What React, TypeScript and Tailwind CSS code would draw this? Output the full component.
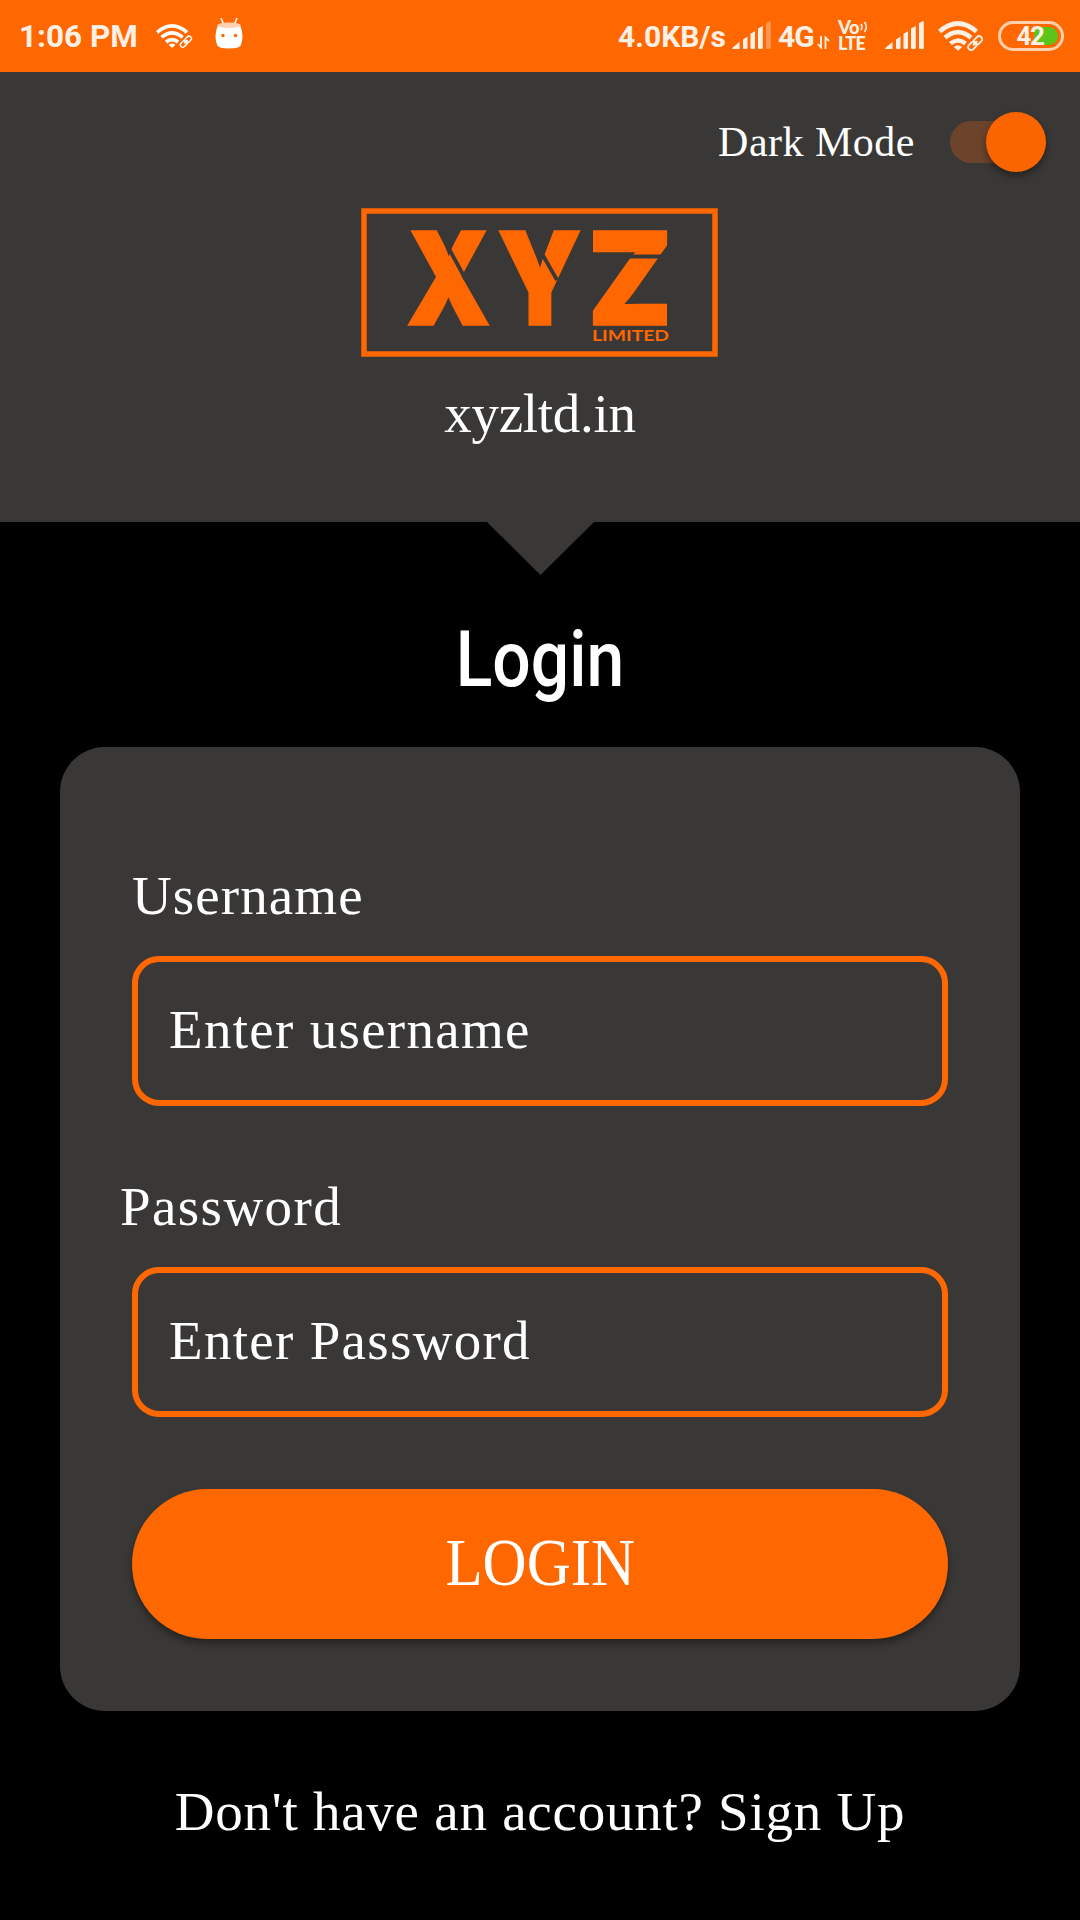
import React, { useState } from "react";

const CREAM = "#fff0e6";

function LinkedWifi({ className, fill }: { className: string; fill: string }) {
  return (
    <svg className={className} viewBox="0 0 46 30" fill="none">
      <g stroke={fill} strokeWidth="4.6">
        <path d="M1.5 10.5Q20 -5.5 38.5 10.5" />
        <path d="M7 16.7Q20 5.5 33 16.7" />
        <path d="M12.5 22.5Q20 16.5 27.5 22.5" />
      </g>
      <path d="M15.8 26Q20 22.6 24.2 26L20 29.8Z" fill={fill} />
      <g transform="rotate(-45 37 22)" stroke="#ff6700" strokeWidth="4.5">
        <rect x="28.5" y="19.2" width="9.5" height="6" rx="3" />
        <rect x="36" y="19.2" width="9.5" height="6" rx="3" />
      </g>
      <g transform="rotate(-45 37 22)" stroke={fill} strokeWidth="1.8">
        <rect x="28.5" y="19.2" width="9.5" height="6" rx="3" />
        <rect x="36" y="19.2" width="9.5" height="6" rx="3" />
        <path d="M34 22.2h6" />
      </g>
    </svg>
  );
}

function Signal({ className, weak }: { className: string; weak?: boolean }) {
  return (
    <svg className={className} viewBox="0 0 39 28" fill={CREAM}>
      <path d="M1 26.2L7.5 21V28H1.2Q-.3 27.8 1 26.2Z" />
      <path d="M11 18.5L15.5 15.5V26.5Q15.5 28 14 28H12.5Q11 28 11 26.5Z" />
      <path d="M18.5 12.7L23 10.2V26.5Q23 28 21.5 28H20Q18.5 28 18.5 26.5Z" />
      <path d="M26 7.5L30.8 5V26.5Q30.8 28 29.3 28H27.5Q26 28 26 26.5Z" />
      <path
        d="M34 2.3L37.5 .2Q38.8 0 38.8 1.3V26.5Q38.8 28 37.3 28H35.5Q34 28 34 26.5Z"
        fillOpacity={weak ? 0.35 : 1}
      />
    </svg>
  );
}

function StatusBar() {
  return (
    <header className="flex h-[72px] items-start bg-[#ff6700] pl-[19px] font-[Roboto] font-bold text-[#fff0e6]">
      <span className="mt-[17px] w-[137px] text-[31.5px] leading-[40px] whitespace-nowrap">1:06 PM</span>
      <LinkedWifi className="mt-[23px] h-[26px] w-[37px]" fill="#ffffff" />
      <svg className="mt-[17px] ml-[22px] h-[32px] w-[28px]" viewBox="0 0 28 32">
        <path d="M6 1L8.5 7M22 1L19.5 7" stroke="#fff" strokeWidth="1.6" />
        <path d="M2.5 9Q14 7 25.5 9Q29.5 20 25.5 29Q23 31.5 14 31.5T2.5 29Q-1.500 20 2.5 9Z" fill="#fff" />
        <ellipse cx="14" cy="8.2" rx="11.8" ry="2.8" fill="#ffd1b0" />
        <circle cx="8" cy="18.5" r="1.7" fill="#ff6700" />
        <circle cx="20.5" cy="18.5" r="1.7" fill="#ff6700" />
      </svg>
      <span className="mt-[17px] ml-auto w-[114px] text-[30px] leading-[40px] whitespace-nowrap">4.0KB/s</span>
      <Signal className="mt-[21px] h-[28px] w-[39px]" weak />
      <span className="mt-[17px] ml-[7px] w-[39px] text-[30px] leading-[40px] tracking-[-1px]">4G</span>
      <svg className="mt-[36px] h-[13px] w-[13px]" viewBox="0 0 13 13" fill="none" stroke={CREAM} strokeWidth="1.8">
        <path d="M4 0V11.5L.8 8M8.5 13V1.5L12 5" />
      </svg>
      <div className="mt-[19px] ml-[8px] flex w-[32px] flex-col font-[Lato] font-black">
        <span className="flex h-[16px] items-center text-[18.5px] leading-[16px] tracking-[-0.5px]">
          Vo
          <svg className="ml-px h-[12px] w-[8px] shrink-0" viewBox="0 0 8 12" fill="none" stroke={CREAM} strokeWidth="1.6">
            <path d="M1 3Q3 6 1 9M4.500 1Q8 6 4.500 11" />
          </svg>
        </span>
        <span className="h-[16px] text-[18px] leading-[17px] tracking-[-0.6px]">LTE</span>
      </div>
      <Signal className="mt-[21px] ml-[15px] h-[28px] w-[39px]" />
      <LinkedWifi className="mt-[21px] ml-[14px] h-[30px] w-[46px]" fill={CREAM} />
      <div className="mt-[21px] mr-[16px] ml-[14px] flex h-[30px] w-[66px] items-center rounded-full border-[3px] border-[#ffd0ad] p-[3px]">
        <div className="relative flex h-[18px] w-full items-center justify-center overflow-visible">
          <div className="absolute top-0 right-0 h-[18px] w-[24px] rounded-r-full bg-[#5cc518]" />
          <span className="relative mr-[2px] text-[26px] leading-none tracking-[-1.500px]">42</span>
        </div>
      </div>
    </header>
  );
}

function Logo() {
  return (
    <svg className="h-[150px] w-[358px]" viewBox="361 208 358 150" aria-label="XYZ Limited">
      <rect x="364" y="211" width="351" height="143" fill="none" stroke="#ff6700" strokeWidth="5.5" />
      <g fill="#ff6700" stroke="#ff6700" strokeWidth="1.5" fontFamily="Inter" fontWeight="900" fontSize="129">
        <text x="406" y="324.700" textLength="85" lengthAdjust="spacingAndGlyphs">X</text>
        <text x="497" y="324.700" textLength="85" lengthAdjust="spacingAndGlyphs">Y</text>
        <text x="587.500" y="324.700" textLength="85" lengthAdjust="spacingAndGlyphs">Z</text>
      </g>
      <path d="M448 247L466 280M541 252L557 280M590 256.500H672" stroke="#3a3836" strokeWidth="3.8" />
      <text x="592" y="340.500" fill="#ff6700" fontFamily="Lato" fontWeight="700" fontSize="14.500" textLength="77" lengthAdjust="spacingAndGlyphs">
        LIMITED
      </text>
    </svg>
  );
}

function Field({ placeholder, type }: { placeholder: string; type: string }) {
  return (
    <input
      type={type}
      placeholder={placeholder}
      className="block h-[150px] w-full rounded-[27px] border-[6px] border-[#ff6700] bg-transparent pb-[4px] pl-[31px] text-[55px] tracking-[1.3px] text-white outline-none placeholder:text-white placeholder:opacity-100"
    />
  );
}

export default function App() {
  const [dark, setDark] = useState(true);
  return (
    <div className="flex h-[1920px] w-[1080px] flex-col overflow-hidden bg-black font-['Liberation_Serif',serif] text-white">
      <StatusBar />
      <section className="flex h-[450px] shrink-0 flex-col items-center bg-[#3a3836]">
        <div className="flex h-[136px] w-full items-center justify-end pt-[4px] pr-[34px]">
          <span className="text-[42px] tracking-[0.5px]">Dark Mode</span>
          <button
            aria-pressed={dark}
            onClick={() => setDark(!dark)}
            className="ml-[35px] flex h-[42px] w-[96px] items-center justify-end rounded-full bg-[#6c432b]"
          >
            <span className="size-[60px] shrink-0 rounded-full bg-[#fb6500] shadow-[0_4px_7px_rgba(0,0,0,0.4)]" />
          </button>
        </div>
        <Logo />
        <p className="mt-[24px] text-[55px] leading-[64px] tracking-[-0.3px]">xyzltd.in</p>
      </section>
      <svg className="h-[53px] w-[107px] shrink-0 self-center" viewBox="0 0 107 53">
        <path d="M0 0H107L53.5 53Z" fill="#3a3836" />
      </svg>
      <h1 className="mt-[40px] h-[98px] origin-center scale-x-[0.88] text-center font-[Roboto] text-[77px] leading-[90px] font-medium">
        Login
      </h1>
      <main className="mx-[60px] mt-[34px] flex h-[964px] shrink-0 flex-col rounded-[45px] bg-[#3a3836] px-[72px]">
        <label className="mt-[117px] h-[92px] text-[55px] leading-[64px] tracking-[1.1px]">Username</label>
        <Field type="text" placeholder="Enter username" />
        <label className="mt-[69px] -ml-[12px] h-[92px] text-[55px] leading-[64px] tracking-[1.4px]">Password</label>
        <Field type="password" placeholder="Enter Password" />
        <button className="mt-[72px] h-[150px] rounded-full bg-[#ff6700] pb-[4px] shadow-[0_5px_7px_rgba(0,0,0,0.35)]">
          <span className="inline-block scale-x-[0.91] text-[67px] leading-none">LOGIN</span>
        </button>
      </main>
      <p className="mt-[69px] text-center text-[55px] leading-[64px] tracking-[0.75px]">Don't have an account? Sign Up</p>
    </div>
  );
}
